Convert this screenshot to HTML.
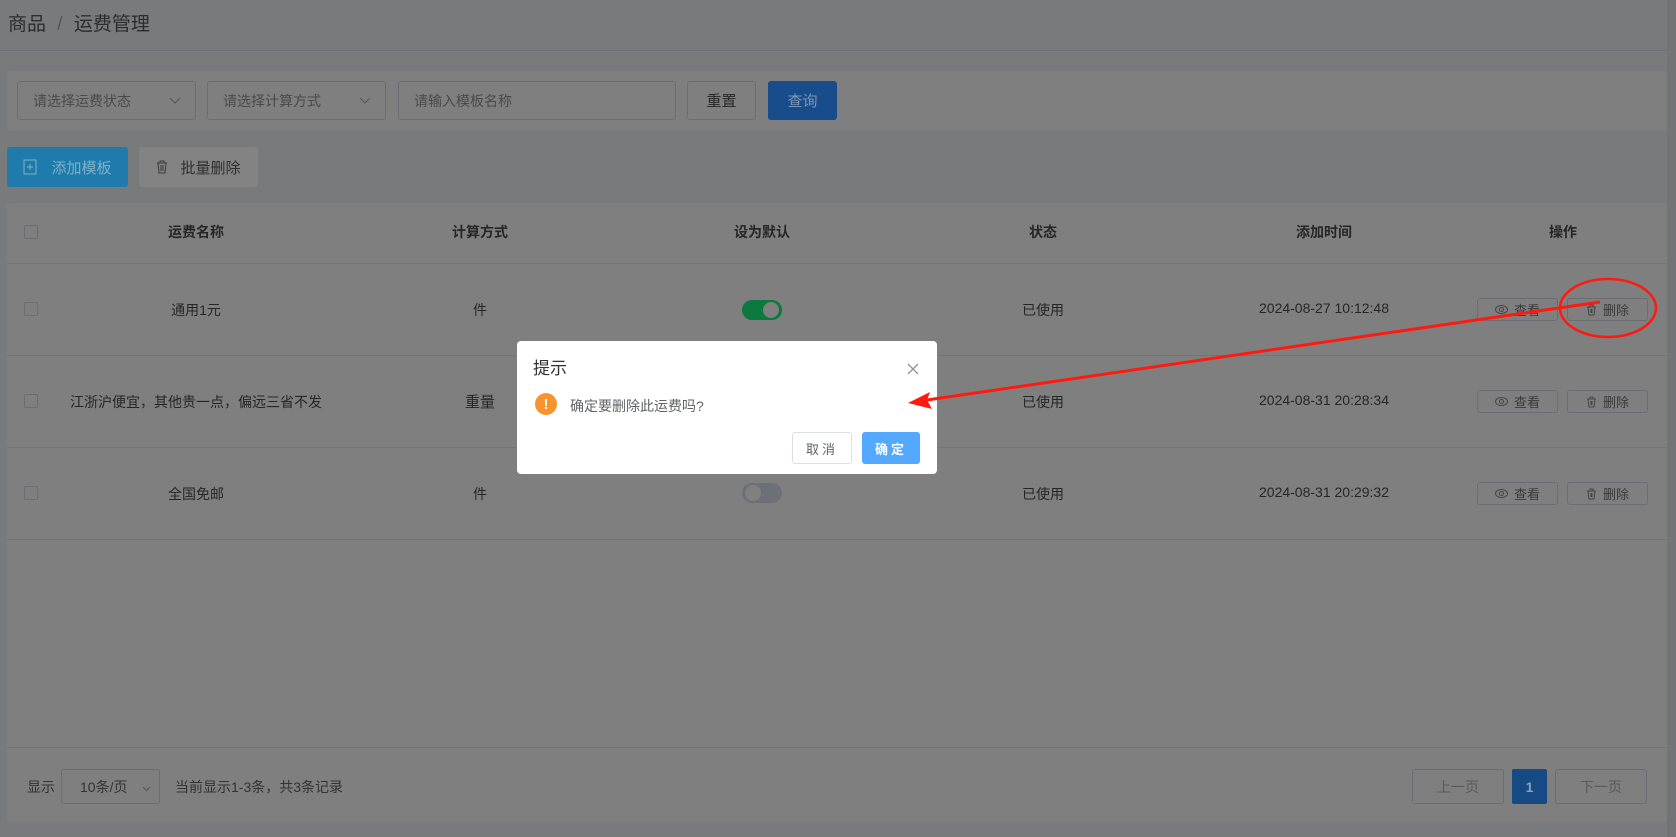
<!DOCTYPE html>
<html><head><meta charset="utf-8"><style>
*{box-sizing:border-box;margin:0;padding:0}
body{width:1676px;height:837px;background:#797a7c;font-family:"Liberation Sans","Noto Sans CJK SC",sans-serif;color:#262626;position:relative;overflow:hidden;font-size:14px}
.a{position:absolute}
.card{background:#7f7f7f;border-radius:3px}
.box{border:1px solid #6c6d73;border-radius:3px;display:flex;align-items:center}
.ph{color:#4a4a4a;font-size:14px}
.c{display:flex;align-items:center;justify-content:center}
.hl{height:1px;background:#747476}
.chev{position:absolute;right:14px;top:15px}
.tr{display:inline-block;margin-right:6px;vertical-align:middle}
</style></head><body>
<div class="a" style="left:8px;top:9px;font-size:19px;color:#2c2c2c">商品 <span style="color:#555;margin:0 6px">/</span> 运费管理</div>
<div class="a hl" style="left:0;top:50px;width:1676px;background:#6e7078"></div>
<div class="a" style="left:1667px;top:0;width:9px;height:837px;background:#737477"></div>

<div class="a card" style="left:7px;top:71px;width:1660px;height:60px"></div>
<div class="a box ph" style="left:17px;top:81px;width:179px;height:39px;padding-left:15px">请选择运费状态<svg class="chev" width="12" height="8"><path d="M1 1l5 5 5-5" fill="none" stroke="#555" stroke-width="1"/></svg></div>
<div class="a box ph" style="left:207px;top:81px;width:179px;height:39px;padding-left:15px">请选择计算方式<svg class="chev" width="12" height="8"><path d="M1 1l5 5 5-5" fill="none" stroke="#555" stroke-width="1"/></svg></div>
<div class="a box ph" style="left:398px;top:81px;width:278px;height:39px;padding-left:15px">请输入模板名称</div>
<div class="a box c" style="left:687px;top:81px;width:69px;height:39px;font-size:15px;color:#262626">重置</div>
<div class="a c" style="left:768px;top:81px;width:69px;height:39px;background:#184c8a;border-radius:3px;color:#7f97b6;font-size:15px">查询</div>

<div class="a c" style="left:7px;top:147px;width:121px;height:40px;background:#1f7bab;border-radius:3px;color:#7fb0cb;font-size:15px"><svg width="14" height="16" style="margin-right:14px"><rect x="1" y="1" width="12" height="14" fill="none" stroke="#7fb0cb"/><path d="M7 5v6M4 8h6" stroke="#7fb0cb"/></svg>添加模板</div>
<div class="a c" style="left:139px;top:147px;width:119px;height:40px;background:#838383;border-radius:3px;color:#2e2e2e;font-size:15px"><svg width="12" height="14" style="margin-right:12px"><path d="M1 3h10M4 3V1h4v2M2 3l1 10h6l1-10M5 5v6M7 5v6" fill="none" stroke="#3a3a3a"/></svg>批量删除</div>

<div class="a card" style="left:7px;top:203px;width:1660px;height:620px"></div>
<div class="a hl" style="left:7px;top:263px;width:1660px"></div>
<div class="a hl" style="left:7px;top:355px;width:1660px"></div>
<div class="a hl" style="left:7px;top:447px;width:1660px"></div>
<div class="a hl" style="left:7px;top:539px;width:1660px"></div>
<div class="a hl" style="left:7px;top:747px;width:1660px"></div>

<div style="font-weight:bold;font-size:14px">
<div class="a c" style="left:96px;top:222px;width:200px">运费名称</div>
<div class="a c" style="left:380px;top:222px;width:200px">计算方式</div>
<div class="a c" style="left:662px;top:222px;width:200px">设为默认</div>
<div class="a c" style="left:943px;top:222px;width:200px">状态</div>
<div class="a c" style="left:1224px;top:222px;width:200px">添加时间</div>
<div class="a c" style="left:1463px;top:222px;width:200px">操作</div>
</div>
<div class="a" style="left:24px;top:225px;width:14px;height:14px;border:1px solid #6c6d73;border-radius:2px"></div>

<div class="a" style="left:24px;top:302px;width:14px;height:14px;border:1px solid #6c6d73;border-radius:2px"></div>
<div class="a c" style="left:96px;top:300px;width:200px">通用1元</div>
<div class="a c" style="left:380px;top:300px;width:200px">件</div>
<div class="a" style="left:742px;top:300px;width:40px;height:20px;border-radius:10px;background:#0c7a3f"><div class="a" style="left:21px;top:2px;width:16px;height:16px;border-radius:50%;background:#808080"></div></div>
<div class="a c" style="left:943px;top:300px;width:200px">已使用</div>
<div class="a c" style="left:1224px;top:300px;width:200px">2024-08-27 10:12:48</div>

<div class="a" style="left:24px;top:394px;width:14px;height:14px;border:1px solid #6c6d73;border-radius:2px"></div>
<div class="a c" style="left:46px;top:392px;width:300px">江浙沪便宜，其他贵一点，偏远三省不发</div>
<div class="a c" style="left:380px;top:391px;width:200px;font-size:15px">重量</div>
<div class="a c" style="left:943px;top:392px;width:200px">已使用</div>
<div class="a c" style="left:1224px;top:392px;width:200px">2024-08-31 20:28:34</div>

<div class="a" style="left:24px;top:486px;width:14px;height:14px;border:1px solid #6c6d73;border-radius:2px"></div>
<div class="a c" style="left:96px;top:484px;width:200px">全国免邮</div>
<div class="a c" style="left:380px;top:484px;width:200px">件</div>
<div class="a" style="left:742px;top:483px;width:40px;height:20px;border-radius:10px;background:#6e7077"><div class="a" style="left:3px;top:2px;width:16px;height:16px;border-radius:50%;background:#808080"></div></div>
<div class="a c" style="left:943px;top:484px;width:200px">已使用</div>
<div class="a c" style="left:1224px;top:484px;width:200px">2024-08-31 20:29:32</div>

<div style="font-size:13px;color:#3a3a3a">
<div class="a box c" style="left:1477px;top:298px;width:81px;height:23px"><svg class="tr" width="13" height="9"><ellipse cx="6.5" cy="4.5" rx="6" ry="4" fill="none" stroke="#444"/><circle cx="6.5" cy="4.5" r="2" fill="none" stroke="#444"/></svg>查看</div>
<div class="a box c" style="left:1567px;top:298px;width:81px;height:23px"><svg class="tr" width="11" height="12"><path d="M1 3h9M4 3V1h3v2M2 3l1 8h5l1-8M5 5v4M6 5v4" fill="none" stroke="#444"/></svg>删除</div>
<div class="a box c" style="left:1477px;top:390px;width:81px;height:23px"><svg class="tr" width="13" height="9"><ellipse cx="6.5" cy="4.5" rx="6" ry="4" fill="none" stroke="#444"/><circle cx="6.5" cy="4.5" r="2" fill="none" stroke="#444"/></svg>查看</div>
<div class="a box c" style="left:1567px;top:390px;width:81px;height:23px"><svg class="tr" width="11" height="12"><path d="M1 3h9M4 3V1h3v2M2 3l1 8h5l1-8M5 5v4M6 5v4" fill="none" stroke="#444"/></svg>删除</div>
<div class="a box c" style="left:1477px;top:482px;width:81px;height:23px"><svg class="tr" width="13" height="9"><ellipse cx="6.5" cy="4.5" rx="6" ry="4" fill="none" stroke="#444"/><circle cx="6.5" cy="4.5" r="2" fill="none" stroke="#444"/></svg>查看</div>
<div class="a box c" style="left:1567px;top:482px;width:81px;height:23px"><svg class="tr" width="11" height="12"><path d="M1 3h9M4 3V1h3v2M2 3l1 8h5l1-8M5 5v4M6 5v4" fill="none" stroke="#444"/></svg>删除</div>
</div>

<div class="a" style="left:27px;top:777px;color:#333">显示</div>
<div class="a box" style="left:61px;top:769px;width:99px;height:35px;padding-left:18px;color:#333">10条/页<svg class="a" style="right:8px;top:16px" width="9" height="6"><path d="M1 1l3.5 3.5L8 1" fill="none" stroke="#555"/></svg></div>
<div class="a" style="left:175px;top:777px;color:#333">当前显示1-3条，共3条记录</div>
<div class="a box c" style="left:1412px;top:769px;width:92px;height:35px;color:#5a5a5a">上一页</div>
<div class="a c" style="left:1512px;top:769px;width:35px;height:35px;background:#164a84;border-radius:2px;color:#8aa0bd;font-weight:bold">1</div>
<div class="a box c" style="left:1555px;top:769px;width:92px;height:35px;color:#5a5a5a">下一页</div>

<div class="a" style="left:517px;top:341px;width:420px;height:133px;background:#fff;border-radius:4px">
<div class="a" style="left:16px;top:13px;font-size:17px;color:#303133">提示</div>
<svg class="a" style="left:390px;top:22px" width="12" height="12"><path d="M1 1l10 10M11 1L1 11" stroke="#909399" stroke-width="1.3"/></svg>
<div class="a c" style="left:18px;top:52px;width:22px;height:22px;border-radius:50%;background:#f7942e;color:#fff;font-weight:bold;font-size:15px">!</div>
<div class="a" style="left:53px;top:55px;font-size:14px;color:#606266">确定要删除此运费吗?</div>
<div class="a c" style="left:275px;top:91px;width:60px;height:32px;border:1px solid #dcdfe6;border-radius:3px;font-size:13px;color:#606266;letter-spacing:3px">取消</div>
<div class="a c" style="left:345px;top:91px;width:58px;height:32px;background:#53a8ff;border-radius:3px;font-size:13px;color:#fff;letter-spacing:3px;font-weight:bold">确定</div>
</div>

<svg class="a" style="left:0;top:0" width="1676" height="837">
<ellipse cx="1608" cy="308" rx="48" ry="29" fill="none" stroke="#ff1a10" stroke-width="2.5"/>
<line x1="1600" y1="302" x2="920" y2="401" stroke="#ff1a10" stroke-width="3"/>
<polygon points="908,403 930,392 927,400 932,409" fill="#ff1a10"/>
</svg>
</body></html>
